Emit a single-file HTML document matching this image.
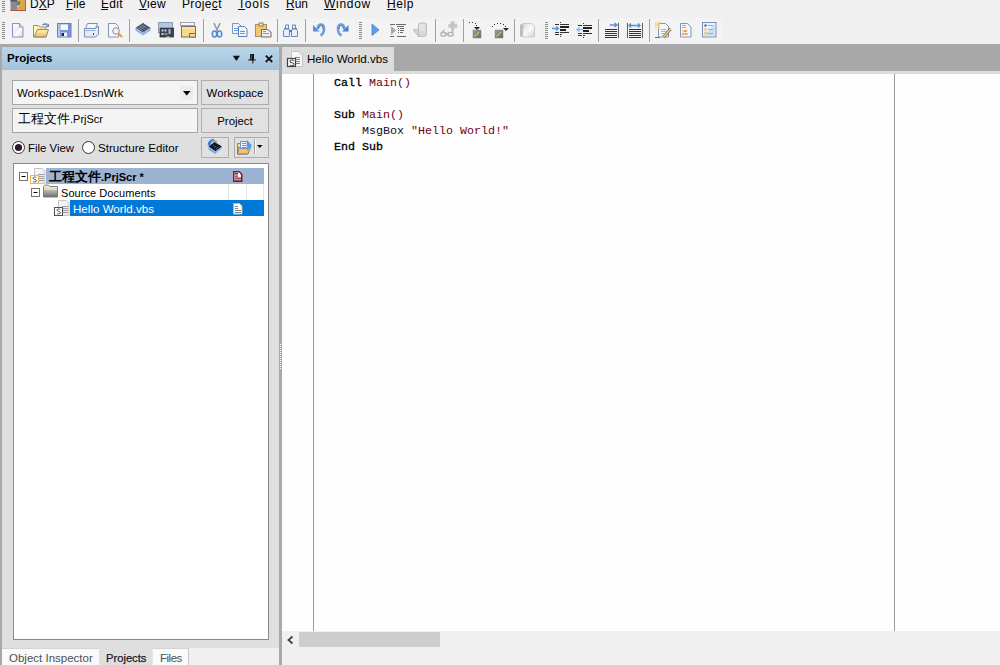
<!DOCTYPE html>
<html><head><meta charset="utf-8">
<style>
*{margin:0;padding:0;box-sizing:border-box}
html,body{width:1000px;height:665px;overflow:hidden;background:#f0f0f0;font-family:"Liberation Sans",sans-serif;font-size:12px;color:#000}
.a{position:absolute}
svg{position:absolute;overflow:visible}
.menu span{position:absolute;top:-3px;font-size:12px;line-height:14px;color:#000;white-space:nowrap}
.menu u{text-decoration:none;border-bottom:1px solid #000}
.sep{position:absolute;top:19px;width:1px;height:23px;background:#a0a0a0}
.grip{position:absolute;width:3px;background:repeating-linear-gradient(#9a9a9a 0 1px,transparent 1px 2.5px)}
.t11{font-size:11px;line-height:14px;white-space:nowrap;color:#000}
.cjk{font-size:13px}
.btn{background:#e1e1e1;border:1px solid #adadad;text-align:center}
.btn span{font-size:11.4px;line-height:25px;color:#000}
.tb{font-size:11px;font-weight:bold;line-height:16px;white-space:nowrap}
.cjkb{font-size:13px;font-weight:bold}
.tr{font-size:11px;line-height:14px;white-space:nowrap}
.code{font-family:"Liberation Mono",monospace;font-size:11.67px;line-height:16px;white-space:pre}
.kw{font-weight:normal;color:#000;-webkit-text-stroke:0.3px #000}
.id{color:#700010}
.ob{color:#10102a}
.st{color:#700010}
</style></head><body>
<div class="a" style="left:1px;top:18px;width:354px;height:25px;background:#f3f3f3"></div>
<div class="a" style="left:357px;top:18px;width:184px;height:25px;background:#f3f3f3"></div>
<div class="a" style="left:543px;top:18px;width:179px;height:25px;background:#f3f3f3"></div>
<!-- menubar -->
<div class="menu">
<span style="left:30px">DXP</span>
<span style="left:66px">File</span>
<span style="left:101px;letter-spacing:0.3px">Edit</span>
<span style="left:139px;letter-spacing:0.3px">View</span>
<span style="left:182px;letter-spacing:0.37px">Project</span>
<span style="left:238px;letter-spacing:0.8px">Tools</span>
<span style="left:286px">Run</span>
<span style="left:324px;letter-spacing:0.7px">Window</span>
<span style="left:387px;letter-spacing:0.6px">Help</span>
</div>
<svg width="1000" height="47" style="left:0;top:0" shape-rendering="auto">
<g fill="#111">
<rect x="39" y="9" width="8" height="1"/>
<rect x="66" y="9" width="6.5" height="1"/>
<rect x="101" y="9" width="7" height="1"/>
<rect x="139" y="9" width="8" height="1"/>
<rect x="212" y="9" width="6" height="1"/>
<rect x="238" y="9" width="7" height="1"/>
<rect x="286" y="9" width="8" height="1"/>
<rect x="324" y="9" width="12" height="1"/>
<rect x="387" y="9" width="9" height="1"/>
</g>
<g fill="#8c8c8c"><rect x="2" y="1" width="3" height="1"/><rect x="2" y="3" width="3" height="1"/><rect x="2" y="5" width="3" height="1"/><rect x="2" y="7" width="3" height="1"/><rect x="2" y="9" width="3" height="1"/><rect x="2" y="11" width="3" height="1"/></g>
<g id="grip2" fill="#8c8c8c"><rect x="2" y="22" width="3" height="1"/><rect x="2" y="24" width="3" height="1"/><rect x="2" y="26" width="3" height="1"/><rect x="2" y="28" width="3" height="1"/><rect x="2" y="30" width="3" height="1"/><rect x="2" y="32" width="3" height="1"/><rect x="2" y="34" width="3" height="1"/><rect x="2" y="36" width="3" height="1"/><rect x="2" y="38" width="3" height="1"/></g>
<g fill="#8c8c8c"><rect x="359" y="22" width="3" height="1"/><rect x="359" y="24" width="3" height="1"/><rect x="359" y="26" width="3" height="1"/><rect x="359" y="28" width="3" height="1"/><rect x="359" y="30" width="3" height="1"/><rect x="359" y="32" width="3" height="1"/><rect x="359" y="34" width="3" height="1"/><rect x="359" y="36" width="3" height="1"/><rect x="359" y="38" width="3" height="1"/></g>
<g fill="#8c8c8c"><rect x="545" y="22" width="3" height="1"/><rect x="545" y="24" width="3" height="1"/><rect x="545" y="26" width="3" height="1"/><rect x="545" y="28" width="3" height="1"/><rect x="545" y="30" width="3" height="1"/><rect x="545" y="32" width="3" height="1"/><rect x="545" y="34" width="3" height="1"/><rect x="545" y="36" width="3" height="1"/><rect x="545" y="38" width="3" height="1"/></g>
<g fill="#a0a0a0">
<rect x="78" y="19" width="1" height="23"/><rect x="129" y="19" width="1" height="23"/><rect x="203" y="19" width="1" height="23"/><rect x="277" y="19" width="1" height="23"/><rect x="305" y="19" width="1" height="23"/>
<rect x="435" y="19" width="1" height="23"/><rect x="463" y="19" width="1" height="23"/><rect x="514" y="19" width="1" height="23"/>
<rect x="598" y="19" width="1" height="23"/><rect x="649" y="19" width="1" height="23"/>
</g>
<!-- logo -->
<rect x="10.5" y="0" width="6.5" height="10.5" fill="#8a8a8e"/>
<rect x="10.5" y="0" width="6.5" height="1.5" fill="#505860"/>
<rect x="17" y="0" width="8.5" height="10.5" fill="#e0a448"/>
<rect x="25" y="0" width="1" height="10.5" fill="#b06040"/>
<path d="M17 6q3.5 0 3.5-3" stroke="#fff0a0" stroke-width="1.6" fill="none"/>
<circle cx="18.5" cy="3.5" r="2.3" fill="#78787c"/>
<rect x="10.5" y="10" width="15.5" height="1" fill="#a05a48"/>
<!-- new doc -->
<defs>
<linearGradient id="gdoc" x1="0" y1="0" x2="1" y2="1"><stop offset="0" stop-color="#ffffff"/><stop offset="0.5" stop-color="#e8ecf2"/><stop offset="0.55" stop-color="#ffffff"/><stop offset="1" stop-color="#d0d6e0"/></linearGradient>
<linearGradient id="gfold" x1="0" y1="0" x2="0" y2="1"><stop offset="0" stop-color="#fff5b0"/><stop offset="1" stop-color="#f0b860"/></linearGradient>
<linearGradient id="gblue" x1="0" y1="0" x2="1" y2="1"><stop offset="0" stop-color="#a8c4f0"/><stop offset="1" stop-color="#4a70b8"/></linearGradient>
</defs>
<path d="M12.5 23.5h7l3.5 3.5v10h-10.5z" fill="url(#gdoc)" stroke="#8494b8" stroke-width="1"/>
<path d="M19.5 23.5v3.5h3.5" fill="#dfe6f0" stroke="#8494b8" stroke-width="1"/>
<!-- open folder -->
<path d="M33.5 25.5h5l1.5 1.5h6v10h-12.5z" fill="#f8e8a0" stroke="#909090" stroke-width="1"/>
<rect x="34" y="26" width="3" height="10.5" fill="#fff8c0"/>
<path d="M37.5 29.5h11l-2.5 7.5h-12z" fill="url(#gfold)" stroke="#8a8a8a" stroke-width="1"/>
<path d="M42.5 25q2.5-1.8 5 -0.5" fill="none" stroke="#6a80a8" stroke-width="1.5"/>
<path d="M49 23.5v3.5h-3.5z" fill="#6a80a8"/>
<!-- save -->
<rect x="57.5" y="23.5" width="13.5" height="13.5" fill="#7894d8" stroke="#6a80c0" stroke-width="1"/>
<rect x="58" y="24" width="2" height="12.5" fill="#b8d0f0"/>
<rect x="60" y="24" width="8.5" height="6.5" fill="#f8fafc" stroke="#4a70c8" stroke-width="0.6"/>
<rect x="61" y="32.5" width="6" height="4" fill="#f0f4f8"/>
<rect x="61.5" y="33" width="2.5" height="3" fill="#222"/>
<!-- print -->
<path d="M87.5 23.5h10l-2 5h-10z" fill="#f4f6fa" stroke="#7a90b8" stroke-width="1"/>
<path d="M84.5 28.5h11l3-2.5v8l-3 3h-11z" fill="#e4ecf8" stroke="#7a90b8" stroke-width="1"/>
<rect x="84.5" y="30" width="11" height="1" fill="#a0b4d8"/>
<rect x="93" y="33" width="1" height="2" fill="#604040"/>
<!-- preview -->
<path d="M108.5 23.5h7l3 3v10.5h-10z" fill="#f8f9fb" stroke="#8494b8" stroke-width="1"/>
<circle cx="116" cy="31" r="3.3" fill="#e8f0fa" stroke="#909090" stroke-width="1"/>
<path d="M118.5 33.5l3.5 3.5" stroke="#e0a040" stroke-width="2.2"/>
<!-- chip -->
<path d="M135.5 28l7.5-5 7.5 5v2.5l-7.5 5-7.5-5z" fill="#8cb4e6"/>
<path d="M135.5 28l7.5-5 7.5 5-7.5 5z" fill="#3e4858"/>
<path d="M136.5 28.5l6.5 4.5 6.5-4.5" fill="none" stroke="#c8dcf4" stroke-width="0.8"/>
<g stroke="#8898b0" stroke-width="0.7"><path d="M139 25.8l7 4.6M141 24.5l7 4.6M137.5 27.5l7 4.4"/><path d="M146.8 25.6l-7 4.6M144.8 24.4l-7 4.6"/></g>
<!-- board -->
<rect x="158.5" y="22.5" width="14" height="10" fill="#d4e2f2" stroke="#909cb0" stroke-width="1"/>
<rect x="159" y="23" width="13" height="4" fill="#b0c8e4"/>
<rect x="160" y="28" width="13.5" height="9" fill="#3c4454" stroke="#2a3040" stroke-width="0.8"/>
<rect x="161.5" y="29.5" width="2" height="2" fill="#c8d0d8"/><rect x="164.5" y="29.5" width="2" height="2" fill="#c8d0d8"/><rect x="168.5" y="29" width="2" height="5" fill="#b0b8c8"/><rect x="161.5" y="33" width="2" height="2" fill="#c8d0d8"/><rect x="164.5" y="33" width="3" height="2" fill="#7090b0"/>
<rect x="166" y="36.5" width="4" height="1.5" fill="#e0d060"/>
<!-- window -->
<rect x="180.5" y="22.5" width="14" height="3" fill="#f8f8f8" stroke="#a0a0a8" stroke-width="1"/>
<rect x="181.5" y="26.5" width="14" height="10.5" fill="#fad88a" stroke="#707078" stroke-width="1"/>
<rect x="182.5" y="27.5" width="12" height="1" fill="#fff4c0"/>
<rect x="189.5" y="33.5" width="6" height="3.5" fill="#fad88a" stroke="#707078" stroke-width="1"/>
<!-- cut -->
<path d="M214 23l3.5 8M220 23l-3.5 8" stroke="#9098a8" stroke-width="1.5"/>
<ellipse cx="214.5" cy="34" rx="2.2" ry="3" fill="none" stroke="#5a88d0" stroke-width="1.6"/>
<ellipse cx="219.5" cy="34" rx="2.2" ry="3" fill="none" stroke="#5a88d0" stroke-width="1.6"/>
<!-- copy -->
<path d="M232.5 23.5h6l2.5 2.5v7.5h-8.5z" fill="#f0f4fa" stroke="#7a98c8" stroke-width="1"/>
<path d="M238.5 26.5h6l2.5 2.5v7.5h-8.5z" fill="#f4f8fc" stroke="#5a80c0" stroke-width="1"/>
<g fill="#6a98d8"><rect x="234" y="28" width="4" height="1"/><rect x="234" y="30" width="4" height="1"/><rect x="240" y="31" width="5" height="1"/><rect x="240" y="33" width="5" height="1"/></g>
<!-- paste -->
<rect x="255.5" y="24.5" width="11" height="12" fill="#f0c870" stroke="#a09070" stroke-width="1"/>
<rect x="259" y="23" width="4" height="3" fill="#f8e8a0" stroke="#908060" stroke-width="1"/>
<path d="M261.5 29.5h6l3.5 2.5v5h-9.5z" fill="#e8eef8" stroke="#806060" stroke-width="1"/>
<g fill="#7a98c8"><rect x="263" y="31" width="3" height="1"/><rect x="263" y="33" width="6" height="1"/></g>
<!-- binoculars -->
<path d="M283.5 36.5v-6l2-2v-3.5h3v3.5l1 2v6z" fill="#e8f0fa" stroke="#6a88c0" stroke-width="1"/>
<path d="M291.5 36.5v-6l1-2v-3.5h3v3.5l2 2v6z" fill="#e8f0fa" stroke="#6a88c0" stroke-width="1"/>
<rect x="289" y="30" width="3" height="2" fill="#5a78b0"/>
<rect x="284" y="28" width="5" height="1.5" fill="#6a88c0"/><rect x="292" y="28" width="5" height="1.5" fill="#6a88c0"/>
<!-- undo -->
<path d="M317.5 29q0.5-4.5 3.5-4.5q3 0 3 4.5q0 4.5-3.5 6.5" fill="none" stroke="#6a9ee0" stroke-width="2.6"/>
<path d="M318.5 29q0.5-3.5 2.5-3.5q2 0 2 3.5" fill="none" stroke="#4a6aa8" stroke-width="0.8"/>
<path d="M313 25v6.5h6.5z" fill="#5a90d8"/>
<!-- redo -->
<path d="M344.5 29q-0.5-4.5-3.5-4.5q-3 0-3 4.5q0 4.5 3.5 6.5" fill="none" stroke="#6a9ee0" stroke-width="2.6"/>
<path d="M343.5 29q-0.5-3.5-2.5-3.5q-2 0-2 3.5" fill="none" stroke="#4a6aa8" stroke-width="0.8"/>
<path d="M348.5 25v6.5h-6.5z" fill="#4a80d0"/>
<!-- play -->
<path d="M372 24v11.5l7-5.5z" fill="#60a0e8" stroke="#4a80d0" stroke-width="0.8"/>
<!-- step -->
<g fill="#6a6a6a"><rect x="390" y="24" width="5" height="1"/><rect x="396" y="24" width="10" height="1"/><rect x="397" y="26" width="7" height="1"/><rect x="398" y="28" width="1" height="1"/><rect x="400" y="28" width="4" height="1"/><rect x="398" y="30" width="1" height="1"/><rect x="400" y="30" width="4" height="1"/><rect x="398" y="32" width="1" height="1"/><rect x="400" y="32" width="3" height="1"/><rect x="390" y="36" width="4" height="1"/><rect x="397" y="36" width="9" height="1"/></g>
<path d="M391 26v9l5-4.5z" fill="#a8a8a8"/>
<!-- hand -->
<path d="M418.5 36.5v-11.5q0-2 2-2h4q2 0 2 2v8.5q0 3-3 3z" fill="#d6d6d6" stroke="#bdbdbd" stroke-width="1"/>
<path d="M418.5 30l-4.5-0.5q-1 0.5 0 1.5l4.5 5.5z" fill="#d6d6d6" stroke="#bdbdbd" stroke-width="1"/>
<g fill="#efefef"><rect x="419.5" y="24" width="1" height="7"/><rect x="421.5" y="24" width="1" height="7"/><rect x="423.5" y="24" width="1" height="7"/></g>
<!-- glasses+ -->
<path d="M451 21.5h3.5v2.5h2.5v3.5h-2.5v2h-3.5v-2h-2.5v-3.5h2.5z" fill="#c4c4c8" stroke="#d0d0d4" stroke-width="0.5"/>
<g fill="none" stroke="#b4b4b4" stroke-width="1.6"><rect x="441" y="32.5" width="5" height="3.5" rx="1.5"/><rect x="448" y="32.5" width="5" height="3.5" rx="1.5"/><path d="M442 32l2.5-2M452.5 32.5v-3M446 34h2"/></g>
<!-- step into -->
<defs><linearGradient id="gsq" x1="0" y1="0" x2="1" y2="1"><stop offset="0" stop-color="#a0a098"/><stop offset="1" stop-color="#686868"/></linearGradient>
<linearGradient id="gpg" x1="0" y1="0" x2="1" y2="1"><stop offset="0" stop-color="#d8d8d8"/><stop offset="0.5" stop-color="#f8f8f8"/><stop offset="1" stop-color="#d4d4d4"/></linearGradient></defs>
<g fill="#303030"><rect x="469" y="22" width="1" height="1"/><rect x="472" y="22" width="1" height="1"/><rect x="475" y="23" width="1" height="1"/><rect x="476" y="25" width="1" height="1"/></g>
<path d="M474 27h6l-3 3z" fill="#222"/>
<rect x="473" y="30" width="8" height="8" fill="url(#gsq)" stroke="#808080" stroke-width="0.5"/>
<path d="M474.5 36l1.5-0.5 3-3.5" stroke="#e8e080" stroke-width="0.9" fill="none"/>
<!-- step over -->
<g fill="#303030"><rect x="492" y="26" width="1" height="1"/><rect x="494" y="24" width="1" height="1"/><rect x="497" y="23" width="1" height="1"/><rect x="500" y="23" width="1" height="1"/><rect x="503" y="24" width="1" height="1"/><rect x="505" y="26" width="1" height="1"/></g>
<path d="M503 28h6l-3 3z" fill="#222"/>
<rect x="495" y="30" width="8" height="8" fill="url(#gsq)" stroke="#808080" stroke-width="0.5"/>
<path d="M496.5 36l1.5-0.5 3-3.5" stroke="#e8e080" stroke-width="0.9" fill="none"/>
<!-- page grey -->
<path d="M522.5 23.5h9l3 3v10.5h-12z" fill="url(#gpg)" stroke="#cacaca" stroke-width="1"/>
<path d="M520 24.5h3.5v4l-1 1v6.5l-1 1-1.5-1z" fill="#bcbcc0"/>
<path d="M529 32l3-5" stroke="#ffffff" stroke-width="1"/>
<!-- indent -->
<g fill="#333"><rect x="555" y="24" width="4" height="1"/><rect x="560" y="24" width="9" height="1"/><rect x="560" y="26" width="9" height="2" fill="#222"/><rect x="560" y="29" width="6" height="2" fill="#222"/><rect x="560" y="32" width="9" height="1"/><rect x="555" y="32" width="4" height="1"/><rect x="555" y="34" width="4" height="1"/><rect x="560" y="34" width="2" height="1"/><rect x="560" y="22" width="1" height="1"/><rect x="560" y="36" width="1" height="1"/></g>
<path d="M552 28.5h6M556 26.5l2.5 2-2.5 2" fill="none" stroke="#5a90e0" stroke-width="1.4"/>
<!-- outdent -->
<g fill="#333"><rect x="578" y="25" width="4" height="1"/><rect x="583" y="25" width="9" height="1"/><rect x="583" y="27" width="9" height="2" fill="#222"/><rect x="583" y="30" width="6" height="2" fill="#222"/><rect x="583" y="33" width="9" height="1"/><rect x="578" y="33" width="4" height="1"/><rect x="578" y="35" width="4" height="1"/><rect x="583" y="35" width="2" height="1"/><rect x="583" y="23" width="1" height="1"/><rect x="583" y="37" width="1" height="1"/></g>
<path d="M577 29.5h6M579.5 27.5l-2.5 2 2.5 2" fill="none" stroke="#90b8f0" stroke-width="1.4"/>
<!-- align right -->
<g fill="#333"><rect x="605" y="29" width="12" height="1"/><rect x="605" y="31" width="12" height="1"/><rect x="605" y="33" width="12" height="1"/><rect x="605" y="35" width="12" height="1"/><rect x="605" y="37" width="12" height="1"/></g>
<rect x="618" y="23" width="1" height="15" fill="#606060"/>
<path d="M610 25h7M614.5 23l2.5 2-2.5 2" fill="none" stroke="#5a90e0" stroke-width="1.4"/>
<!-- justify -->
<g fill="#333"><rect x="629" y="29" width="12" height="1"/><rect x="629" y="31" width="12" height="1"/><rect x="629" y="33" width="12" height="1"/><rect x="629" y="35" width="12" height="1"/><rect x="629" y="37" width="12" height="1"/></g>
<rect x="627" y="23" width="1" height="15" fill="#606060"/><rect x="642" y="23" width="1" height="15" fill="#606060"/>
<path d="M629 25.5h11M631 23.5l-2 2 2 2M638 23.5l2 2-2 2" fill="none" stroke="#5a90e0" stroke-width="1.4"/>
<!-- edit -->
<path d="M658.5 23.5h7l3 3v10.5h-10z" fill="#f4f6fa" stroke="#8494b8" stroke-width="1"/>
<g fill="#f8d860" opacity="0.95"><rect x="655" y="22" width="1.5" height="1.5"/><rect x="658" y="22" width="2.5" height="1.5"/><rect x="655" y="24.5" width="5.5" height="1.5"/><rect x="657" y="23" width="1.5" height="4"/><rect x="655" y="27" width="2" height="1.5"/><rect x="658" y="27" width="2.5" height="1.5"/></g>
<g fill="#a8b8d0"><rect x="661" y="29" width="5" height="1"/><rect x="661" y="31" width="5" height="1"/><rect x="661" y="33" width="3" height="1"/></g>
<path d="M663.5 37l7-8" stroke="#6a6050" stroke-width="3"/>
<path d="M663.5 37l7-8" stroke="#f0d070" stroke-width="1.6"/>
<rect x="655" y="37" width="5" height="1" fill="#4a70b0"/>
<!-- doc -->
<path d="M680.5 23.5h7l3.5 3.5v10h-10.5z" fill="#f4f6fa" stroke="#8494b8" stroke-width="1"/>
<g fill="#f0a040"><rect x="682" y="25" width="4" height="1"/><rect x="682" y="27" width="4" height="1"/><rect x="684" y="30" width="3" height="2"/><rect x="682" y="33" width="2" height="2"/><rect x="684.5" y="33" width="3" height="2"/></g>
<rect x="682" y="30" width="2" height="2" fill="#d8d8e8"/>
<!-- checklist -->
<rect x="702.5" y="22.5" width="13.5" height="14.5" fill="#eef3fa" stroke="#7a90b8" stroke-width="1"/>
<path d="M703 36l12-12v12z" fill="#cfe0f0"/>
<circle cx="705.5" cy="25.5" r="1.2" fill="#3a70d0"/>
<circle cx="705.5" cy="29.5" r="1" fill="#fff" stroke="#e0a040" stroke-width="0.8"/>
<circle cx="705.5" cy="33" r="1" fill="#fff" stroke="#e0a040" stroke-width="0.8"/>
<g fill="#98a8c8"><rect x="708" y="25" width="5" height="1"/><rect x="708" y="29" width="5" height="1"/><rect x="708" y="33" width="5" height="1"/></g>

</svg>
<!-- grey band under toolbar -->
<div class="a" style="left:0;top:44px;width:1000px;height:3px;background:#a9a9a9"></div>

<!-- LEFT PANEL -->
<div class="a" style="left:0;top:47px;width:2px;height:618px;background:#a9a9a9"></div>
<div class="a" style="left:2px;top:47px;width:277px;height:23px;background:linear-gradient(#b9d5ea,#a3c3da)"></div>
<div class="a" style="left:7px;top:48px;font-size:11.5px;font-weight:bold;line-height:20px">Projects</div>
<div class="a" style="left:2px;top:70px;width:277px;height:578px;background:#dfdfdf"></div>
<!-- combobox -->
<div class="a" style="left:12px;top:80px;width:186px;height:25px;background:#f4f4f4;border:1px solid #a6a6a6"></div>
<div class="a t11" style="left:17px;top:86px;font-size:11.4px">Workspace1.DsnWrk</div>
<div class="a" style="left:180px;top:86px;width:13px;height:14px;background:#ececec"></div>
<svg width="10" height="6" style="left:183px;top:91px"><path d="M0 0h7.5l-3.75 4.5z" fill="#000"/></svg>
<div class="a btn" style="left:201px;top:80px;width:68px;height:25px"><span>Workspace</span></div>
<!-- project textbox -->
<div class="a" style="left:12px;top:108px;width:186px;height:25px;background:#f4f4f4;border:1px solid #a6a6a6"></div>
<div class="a t11" style="left:18px;top:112px"><span class="cjk">工程文件</span>.PrjScr</div>
<div class="a btn" style="left:201px;top:108px;width:68px;height:25px"><span>Project</span></div>
<!-- radios -->
<svg width="14" height="14" style="left:12px;top:141px"><circle cx="6.5" cy="6.5" r="6" fill="#fff" stroke="#333" stroke-width="1"/><circle cx="6.5" cy="6.5" r="3.6" fill="#2a1a30"/></svg>
<div class="a t11" style="left:28px;top:141px;font-size:11.4px">File View</div>
<svg width="14" height="14" style="left:82px;top:141px"><circle cx="6.5" cy="6.5" r="6" fill="#fff" stroke="#333" stroke-width="1"/></svg>
<div class="a t11" style="left:98px;top:141px;font-size:11.6px">Structure Editor</div>
<div class="a btn" style="left:201px;top:137px;width:28px;height:21px"></div>
<div class="a btn" style="left:234px;top:137px;width:35px;height:21px"></div>
<!-- tree -->
<div class="a" style="left:13px;top:163px;width:256px;height:477px;background:#fff;border:1px solid #8a8a8a"></div>
<!-- header icons -->
<svg width="50" height="20" style="left:228px;top:50px">
<path d="M4.8 5.8h7.2l-3.6 5.2z" fill="#111"/>
<path d="M22 4h4v5.5h1.8v1h-7.6v-1h1.8z" fill="#111"/><rect x="22.8" y="4.5" width="1" height="5" fill="#666"/>
<rect x="24.3" y="10" width="1" height="3.5" fill="#111"/>
<path d="M37.8 5.6l6.4 6.4M44.2 5.6l-6.4 6.4" stroke="#111" stroke-width="1.8"/>
</svg>
<!-- tree rows -->
<div class="a" style="left:46px;top:168px;width:218px;height:16px;background:#9cb4d2"></div>
<div class="a" style="left:70px;top:200px;width:194px;height:16px;background:#0078d7"></div>
<div class="a" style="left:228px;top:184px;width:1px;height:16px;background:#e2e2e2"></div>
<div class="a" style="left:246px;top:184px;width:1px;height:16px;background:#e2e2e2"></div>
<div class="a" style="left:263px;top:184px;width:1px;height:16px;background:#e2e2e2"></div>
<div class="a tb" style="left:49px;top:169px"><span class="cjkb">工程文件</span>.PrjScr *</div>
<div class="a tr" style="left:61px;top:186px;letter-spacing:0.06px">Source Documents</div>
<div class="a tr" style="left:73px;top:202px;color:#fff;font-size:11.6px">Hello World.vbs</div>
<svg width="260" height="60" style="left:0;top:160px">
<defs>
<linearGradient id="gpage" x1="0" y1="0" x2="1" y2="1"><stop offset="0" stop-color="#fafafa"/><stop offset="1" stop-color="#e4e4e4"/></linearGradient>
<linearGradient id="gfld" x1="0" y1="0" x2="0" y2="1"><stop offset="0" stop-color="#ece8cc"/><stop offset="0.4" stop-color="#e0dcb8"/><stop offset="0.45" stop-color="#b8b8b0"/><stop offset="1" stop-color="#707070"/></linearGradient>
</defs>
<!-- expand boxes -->
<rect x="19.5" y="12.5" width="8" height="8" fill="#fff" stroke="#7a6e6e" stroke-width="1"/><rect x="21.5" y="16" width="4" height="1" fill="#000"/>
<rect x="31.5" y="28.5" width="8" height="8" fill="#fff" stroke="#7a6e6e" stroke-width="1"/><rect x="33.5" y="32" width="4" height="1" fill="#000"/>
<!-- project icon -->
<path d="M34.5 8.5h8l2.5 2.5v12.5h-10.5z" fill="url(#gpage)" stroke="#c4c4c4" stroke-width="1"/>
<g fill="#a0a0a0"><rect x="38" y="14" width="6" height="1"/><rect x="39" y="16" width="5" height="1"/><rect x="39" y="18" width="5" height="1"/><rect x="39" y="20" width="5" height="1"/></g>
<rect x="30.5" y="15.5" width="8" height="8" fill="#fff" stroke="#f0b050" stroke-width="1"/>
<path d="M36.3 17.6q-0.4-0.6-1.6-0.6q-1.7 0-1.7 1.2q0 1 1.7 1.2q1.7 0.3 1.7 1.3q0 1.3-1.7 1.3q-1.2 0-1.7-0.7" fill="none" stroke="#555" stroke-width="1"/>
<!-- folder -->
<path d="M43.5 26.5l1.5-1.5h3.5l1.5 1.5h7.5v10.5h-14z" fill="url(#gfld)" stroke="#6a6a60" stroke-width="0.8"/>
<!-- vbs icon -->
<path d="M58.5 40.5h8l2.5 2.5v12.5h-10.5z" fill="url(#gpage)" stroke="#c4c4c4" stroke-width="1"/>
<g fill="#a0a0a0"><rect x="62" y="46" width="6" height="1"/><rect x="63" y="48" width="5" height="1"/><rect x="63" y="50" width="5" height="1"/><rect x="63" y="52" width="5" height="1"/></g>
<rect x="54.5" y="47.5" width="8" height="8" fill="#fff" stroke="#505050" stroke-width="1"/>
<path d="M60.3 49.6q-0.4-0.6-1.6-0.6q-1.7 0-1.7 1.2q0 1 1.7 1.2q1.7 0.3 1.7 1.3q0 1.3-1.7 1.3q-1.2 0-1.7-0.7" fill="none" stroke="#555" stroke-width="1"/>
<!-- right icons -->
<path d="M233 11h6.5l3 3v8h-9.5z" fill="#8a1030"/>
<path d="M234.5 12.5h4.5l2 2v6h-6.5z" fill="#fff"/>
<g fill="#8a1030"><rect x="235" y="13" width="3" height="1.5"/><rect x="235" y="15.5" width="3" height="1.2"/><rect x="235" y="17.5" width="6" height="1.2"/><rect x="235" y="19.5" width="6" height="1"/></g>
<path d="M233.5 43.5h6l2.5 2.5v8h-8.5z" fill="#fff" stroke="#c8b8a0" stroke-width="1"/>
<g fill="#808080"><rect x="235" y="46" width="3" height="1"/><rect x="235" y="48" width="3" height="1"/><rect x="235" y="50" width="6" height="1"/><rect x="235" y="52" width="6" height="1"/></g>
</svg>

<!-- bottom tabs -->
<div class="a" style="left:2px;top:648px;width:98px;height:17px;background:#fafafa;border-right:1px solid #c8c8c8;border-top:1px solid #d4d4d4"></div>
<div class="a" style="left:99px;top:648px;width:54px;height:17px;background:#dfdfdf"></div>
<div class="a" style="left:152px;top:648px;width:37px;height:17px;background:#fbfbfb;border-left:1px solid #e6e6e6;border-right:1px solid #c8c8c8;border-top:1px solid #d4d4d4"></div>
<div class="a tr" style="left:9px;top:651px;color:#505050;font-size:11.5px">Object Inspector</div>
<div class="a tr" style="left:106px;top:651px;color:#1a1a2a;font-size:11.2px;-webkit-text-stroke:0.25px #1a1a2a">Projects</div>
<div class="a tr" style="left:160px;top:651px;color:#505050;font-size:11.5px;letter-spacing:-0.5px">Files</div>
<!-- button icons -->
<svg width="70" height="22" style="left:200px;top:136px">
<path d="M8.5 10.5l6-4.5 7.5 4.5-6.5 5z" fill="#101828"/>
<path d="M8.5 10.5v2.5l7 4.5 6.5-5v-2l-6.5 5z" fill="#90b8e8"/>
<path d="M8.5 13l7 4.5" stroke="#6a90c8" stroke-width="1"/>
<path d="M9 9.5q0-5 5-5.5" stroke="#2a7ae0" stroke-width="2.6" fill="none"/>
<path d="M11 6q3-2 6 0" stroke="#a0a0a0" stroke-width="1.6" fill="none"/>
<g fill="#4a6a98"><rect x="13" y="9" width="1" height="1"/><rect x="15" y="10" width="1" height="1"/><rect x="17" y="11" width="1" height="1"/><rect x="14" y="11.5" width="1" height="1"/><rect x="16" y="12.5" width="1" height="1"/></g>
<path d="M37.5 7.5h4l1 1h4v9.5h-9z" fill="#f4dca0" stroke="#807050" stroke-width="0.8"/>
<path d="M38.5 11.5h12l-2.5 6.5h-10.5z" fill="#f0c070" stroke="#705838" stroke-width="0.7"/>
<rect x="40.5" y="5.5" width="6.5" height="7" fill="#f8fafc" stroke="#7090c8" stroke-width="1"/>
<g fill="#6a90d0"><rect x="42" y="7" width="4" height="1"/><rect x="42" y="9" width="4" height="1"/><rect x="42" y="11" width="4" height="1"/></g>
<path d="M47 4l5 5.5-5 5.5z" fill="#50a0f0"/>
<rect x="54" y="3" width="1" height="15" fill="#a0a0a0"/><rect x="55" y="3" width="1" height="15" fill="#fff"/>
<path d="M57 9h5.5l-2.75 3z" fill="#000"/>
</svg>
<!-- splitter -->
<div class="a" style="left:279px;top:47px;width:3px;height:618px;background:#a9a9a9"></div>

<!-- EDITOR -->
<div class="a" style="left:282px;top:47px;width:718px;height:24px;background:#a8a8a8"></div>
<div class="a" style="left:282px;top:71px;width:718px;height:3px;background:#dcdcdc"></div>
<div class="a" style="left:282px;top:47px;width:112px;height:27px;background:#dcdcdc"></div>
<div class="a" style="left:307px;top:50px;font-size:11.6px;line-height:18px">Hello World.vbs</div>
<div class="a" style="left:282px;top:74px;width:718px;height:557px;background:#fefefe"></div>
<div class="a" style="left:313px;top:74px;width:1px;height:557px;background:#999"></div>
<div class="a" style="left:894px;top:74px;width:1px;height:557px;background:#999"></div>
<div class="a code" style="left:334px;top:75px"><span class="kw">Call</span> <span class="id">Main()</span>

<span class="kw">Sub</span> <span class="id">Main()</span>
    <span class="ob">MsgBox</span> <span class="st">"Hello World!"</span>
<span class="kw">End Sub</span></div>

<!-- scrollbar -->
<div class="a" style="left:282px;top:631px;width:718px;height:34px;background:#f0f0f0"></div>
<div class="a" style="left:299px;top:632px;width:141px;height:15px;background:#cdcdcd"></div>

<!-- editor tab icon -->
<svg width="24" height="22" style="left:282px;top:48px">
<path d="M9.5 3.5h8.5l2.5 2.5v12.5h-11z" fill="#f6f7f8" stroke="#c0c4c8" stroke-width="1"/>
<path d="M18 3.5v2.5h2.5" fill="#fff" stroke="#c0c4c8" stroke-width="1"/>
<g fill="#8a8080"><rect x="13" y="9" width="5" height="1"/><rect x="13.5" y="11" width="4.5" height="1"/><rect x="13.5" y="13" width="4.5" height="1"/><rect x="13.5" y="15" width="4.5" height="1"/></g>
<rect x="5.5" y="10.5" width="8" height="8" fill="#fff" stroke="#404040" stroke-width="1.2"/>
<path d="M11.8 12.8q-0.5-0.8-1.8-0.8q-2 0-2 1.4q0 1.2 2 1.4q2 0.3 2 1.5q0 1.5-2 1.5q-1.4 0-2-0.8" fill="none" stroke="#4a4a4a" stroke-width="1.1"/>
</svg>
<!-- scroll arrow -->
<svg width="10" height="10" style="left:286px;top:635px"><path d="M6.5 1.5l-4 3.5 4 3.5" fill="none" stroke="#404040" stroke-width="1.8"/></svg>
<svg width="3" height="26" style="left:279px;top:344px"><g fill="#fff"><rect x="1" y="0" width="1" height="1"/><rect x="1" y="2" width="1" height="1"/><rect x="1" y="4" width="1" height="1"/><rect x="1" y="6" width="1" height="1"/><rect x="1" y="8" width="1" height="1"/><rect x="1" y="10" width="1" height="1"/><rect x="1" y="12" width="1" height="1"/><rect x="1" y="14" width="1" height="1"/><rect x="1" y="16" width="1" height="1"/><rect x="1" y="18" width="1" height="1"/><rect x="1" y="20" width="1" height="1"/><rect x="1" y="22" width="1" height="1"/><rect x="1" y="24" width="1" height="1"/></g></svg>
</body></html>
